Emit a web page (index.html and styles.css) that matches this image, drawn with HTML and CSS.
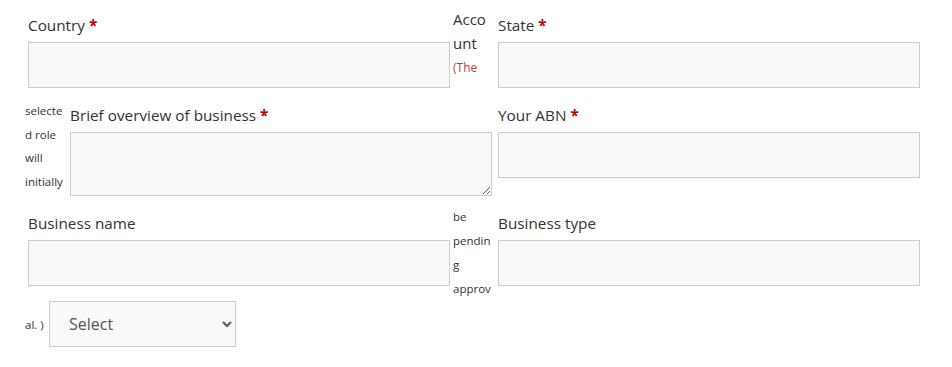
FILE: index.html
```html
<!DOCTYPE html>
<html lang="en">
<head>
    <meta charset="UTF-8">
    <meta name="viewport" content="width=device-width, initial-scale=1.0">
    <title>Register</title>
    <link rel="stylesheet" href="styles.css">
</head>
<body>
    <form class="register-form">
        <div class="form-row">
            <p class="field">
                <label for="country">Country <abbr class="required">*</abbr></label>
                <input type="text" id="country" name="country">
            </p>
            <div class="role-note role-note-mid">
                <span class="note-big">Acco</span>
                <span class="note-big">unt</span>
                <span class="note-red">(The</span>
            </div>
            <p class="field">
                <label for="state">State <abbr class="required">*</abbr></label>
                <input type="text" id="state" name="state">
            </p>
        </div>

        <div class="form-row form-row-shift">
            <div class="role-note role-note-left">
                <span>selecte</span>
                <span>d role</span>
                <span>will</span>
                <span>initially</span>
            </div>
            <p class="field">
                <label for="overview">Brief overview of business <abbr class="required">*</abbr></label>
                <textarea id="overview" name="overview"></textarea>
            </p>
            <p class="field field-abn">
                <label for="abn">Your ABN <abbr class="required">*</abbr></label>
                <input type="text" id="abn" name="abn">
            </p>
        </div>

        <div class="form-row">
            <p class="field">
                <label for="bizname">Business name</label>
                <input type="text" id="bizname" name="bizname">
            </p>
            <div class="role-note role-note-mid role-note-low">
                <span>be</span>
                <span>pendin</span>
                <span>g</span>
                <span>approv</span>
            </div>
            <p class="field">
                <label for="biztype">Business type</label>
                <input type="text" id="biztype" name="biztype">
            </p>
        </div>

        <div class="form-row form-row-select">
            <span class="role-tail">al. )</span>
            <select class="role-select" name="role">
                <option>Select</option>
                <option>Wholesale</option>
                <option>Retail</option>
            </select>
        </div>
    </form>
</body>
</html>
```

FILE: styles.css
```css
body {
    margin: 7px 0 0 25px;
    font-family: "Open Sans", Arial, sans-serif;
    color: #333;
    background: #fff;
}

.register-form {
    width: 900px;
}

.form-row {
    display: flex;
    align-items: flex-start;
    padding-left: 3px;
}

.form-row > * {
    flex-shrink: 0;
}

.form-row-shift,
.form-row-select {
    padding-left: 0;
}

.field {
    width: 422px;
    margin: 0;
    padding: 6px 0 9px;
}

.field label {
    display: block;
    font-size: 15.3px;
    line-height: 24px;
    margin-bottom: 5px;
    color: #333;
}

.required {
    color: #b00;
    font-weight: bold;
    text-decoration: none;
    border: none;
}

.field input,
.field textarea {
    display: block;
    width: 100%;
    height: 46px;
    margin: 0;
    border: 1px solid #ccc;
    background: #f9f9f9;
    box-sizing: border-box;
    font-family: inherit;
}

.field textarea {
    height: 64px;
    resize: vertical;
}

.field-abn {
    margin-left: 6px;
}

.role-note {
    display: flex;
    flex-direction: column;
    font-size: 11.5px;
    line-height: 23.5px;
    color: #333;
    white-space: nowrap;
}

.role-note-mid {
    width: 45px;
    padding-left: 3px;
}

.note-big {
    font-size: 15px;
    line-height: 24px;
}

.note-red {
    color: #b8403a;
    font-size: 12px;
    line-height: 24px;
    margin-top: 1px;
}

.role-note-left {
    width: 45px;
    padding-top: 2px;
}

.role-note-low {
    line-height: 24px;
}

.form-row-select {
    align-items: center;
}

.role-tail {
    width: 24px;
    font-size: 11.5px;
    white-space: nowrap;
}

.role-select {
    width: 187px;
    height: 46px;
    padding: 0 8px 0 15px;
    border: 1px solid #ccc;
    background: #f9f9f9;
    color: #555;
    font-family: inherit;
    font-size: 16px;
}
```
